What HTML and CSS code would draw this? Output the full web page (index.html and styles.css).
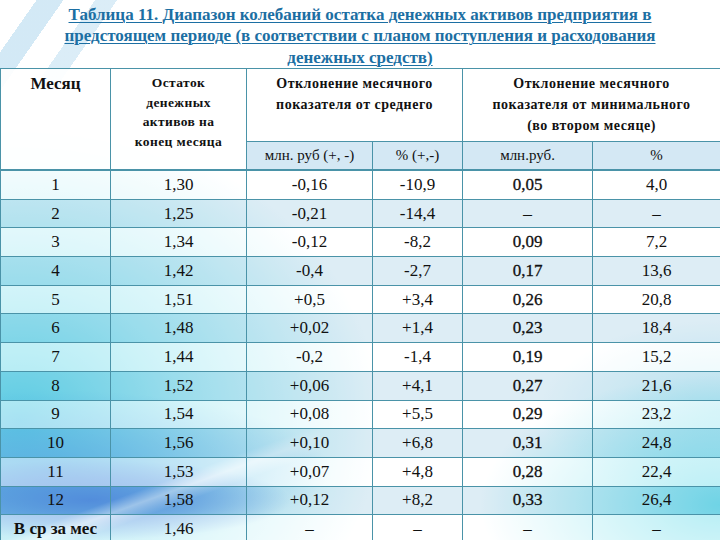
FILE: index.html
```html
<!DOCTYPE html>
<html>
<head>
<meta charset="utf-8">
<title>Таблица 11</title>
<link rel="stylesheet" href="styles.css">
</head>
<body>
<div class="page">
  <h1 class="title"><span>Таблица 11. Диапазон колебаний остатка денежных активов предприятия в</span><br><span>предстоящем периоде (в соответствии с планом поступления и расходования</span><br><span>денежных средств)</span></h1>
  <table class="grid">
    <colgroup>
      <col class="c1"><col class="c2"><col class="c3"><col class="c4"><col class="c5"><col class="c6">
    </colgroup>
    <thead>
      <tr class="hrow">
        <th rowspan="2" class="month">Месяц</th>
        <th rowspan="2" class="rest">Остаток<br>денежных<br>активов на<br>конец месяца</th>
        <th colspan="2" class="dev">Отклонение месячного<br>показателя от среднего</th>
        <th colspan="2" class="dev">Отклонение месячного<br>показателя от минимального<br>(во втором месяце)</th>
      </tr>
      <tr class="subrow">
        <th>млн. руб (+, -)</th><th>% (+,-)</th><th>млн.руб.</th><th>%</th>
      </tr>
    </thead>
    <tbody>
      <tr><td>1</td><td>1,30</td><td>-0,16</td><td>-10,9</td><td class="b">0,05</td><td>4,0</td></tr>
      <tr><td>2</td><td>1,25</td><td>-0,21</td><td>-14,4</td><td class="b">–</td><td>–</td></tr>
      <tr><td>3</td><td>1,34</td><td>-0,12</td><td>-8,2</td><td class="b">0,09</td><td>7,2</td></tr>
      <tr><td>4</td><td>1,42</td><td>-0,4</td><td>-2,7</td><td class="b">0,17</td><td>13,6</td></tr>
      <tr><td>5</td><td>1,51</td><td>+0,5</td><td>+3,4</td><td class="b">0,26</td><td>20,8</td></tr>
      <tr><td>6</td><td>1,48</td><td>+0,02</td><td>+1,4</td><td class="b">0,23</td><td>18,4</td></tr>
      <tr><td>7</td><td>1,44</td><td>-0,2</td><td>-1,4</td><td class="b">0,19</td><td>15,2</td></tr>
      <tr><td>8</td><td>1,52</td><td>+0,06</td><td>+4,1</td><td class="b">0,27</td><td>21,6</td></tr>
      <tr><td>9</td><td>1,54</td><td>+0,08</td><td>+5,5</td><td class="b">0,29</td><td>23,2</td></tr>
      <tr><td>10</td><td>1,56</td><td>+0,10</td><td>+6,8</td><td class="b">0,31</td><td>24,8</td></tr>
      <tr><td>11</td><td>1,53</td><td>+0,07</td><td>+4,8</td><td class="b">0,28</td><td>22,4</td></tr>
      <tr><td>12</td><td>1,58</td><td>+0,12</td><td>+8,2</td><td class="b">0,33</td><td>26,4</td></tr>
      <tr class="avg"><td class="avglabel">В ср за мес</td><td>1,46</td><td>–</td><td>–</td><td>–</td><td>–</td></tr>
    </tbody>
  </table>
</div>
</body>
</html>
```

FILE: styles.css
```css
html, body {
  margin: 0;
  padding: 0;
}

body {
  width: 720px;
  height: 540px;
  overflow: hidden;
  font-family: "Liberation Serif", serif;
  color: #111;
  background:
    linear-gradient(125deg, rgba(255,255,255,0) 0 30px, rgba(175,215,238,0.55) 30px 52px, rgba(255,255,255,0) 52px 78px, rgba(175,215,238,0.45) 78px 96px, rgba(255,255,255,0) 96px) 0 0 / 180px 90px no-repeat,
    linear-gradient(160deg, rgba(255,255,255,0) 0 55%, rgba(255,255,255,0.5) 60%, rgba(255,255,255,0) 66%, rgba(255,255,255,0) 100%) 0 400px / 320px 140px no-repeat,
    radial-gradient(ellipse 200px 40px at 90px 500px, rgba(18,86,210,0.9) 0%, rgba(18,86,210,0.5) 55%, rgba(18,86,210,0) 100%),
    radial-gradient(ellipse 280px 80px at 50px 470px, rgba(25,130,220,0.7) 0%, rgba(25,130,220,0) 100%),
    radial-gradient(ellipse 360px 300px at 20px 420px, rgba(40,200,225,1) 0%, rgba(70,210,230,0.6) 45%, rgba(70,210,230,0) 100%),
    radial-gradient(ellipse 240px 130px at 720px 505px, rgba(40,205,225,0.85) 0%, rgba(40,205,225,0) 100%),
    radial-gradient(ellipse 180px 90px at 720px 410px, rgba(120,215,235,0.5) 0%, rgba(120,215,235,0) 100%),
    #ffffff;
}

.page {
  display: flex;
  flex-direction: column;
}

.title {
  margin: 0;
  padding: 4px 0 0;
  height: 64px;
  text-align: center;
  font-family: "Liberation Serif", serif;
  font-size: 17px;
  line-height: 21.3px;
  font-weight: bold;
  color: #1c6fa3;
  text-decoration: underline;
  text-decoration-thickness: 1px;
  text-underline-offset: 2px;
  white-space: nowrap;
}

.grid {
  width: 720px;
  border-collapse: collapse;
  table-layout: fixed;
  font-family: "Liberation Serif", serif;
}

.c1 { width: 110px; }
.c2 { width: 136px; }
.c3 { width: 126px; }
.c4 { width: 90px; }
.c5 { width: 130px; }
.c6 { width: 128px; }

.grid th, .grid td {
  border: 1px solid #4a93a8;
  padding: 0;
  text-align: center;
}

.hrow th {
  height: 68px;
  vertical-align: top;
  background: rgba(255,255,255,0.9);
  font-weight: bold;
}

.month {
  font-size: 17px;
  padding-top: 5px !important;
  line-height: 20px;
  border-bottom: 2px solid #4a93a8 !important;
}

.rest {
  font-size: 13.5px;
  letter-spacing: 0.4px;
  line-height: 19.5px;
  padding-top: 4px !important;
  border-bottom: 2px solid #4a93a8 !important;
}

.dev {
  font-size: 14px;
  letter-spacing: 0.5px;
  line-height: 21px;
  padding-top: 4px !important;
}

.subrow th {
  height: 27px;
  font-weight: normal;
  font-size: 15px;
  background: rgba(205,228,242,0.85);
  border-bottom: 2px solid #4a93a8;
}

.grid td {
  height: 27.7px;
  font-size: 17px;
  line-height: 20px;
}

.grid tbody tr:nth-child(odd) td {
  background: rgba(255,255,255,0.6);
}

.grid tbody tr:nth-child(even) td {
  background: rgba(170,210,230,0.4);
}

.b {
  -webkit-text-stroke: 0.3px #111;
}

.avglabel {
  font-weight: bold;
  font-size: 16px;
}
```
